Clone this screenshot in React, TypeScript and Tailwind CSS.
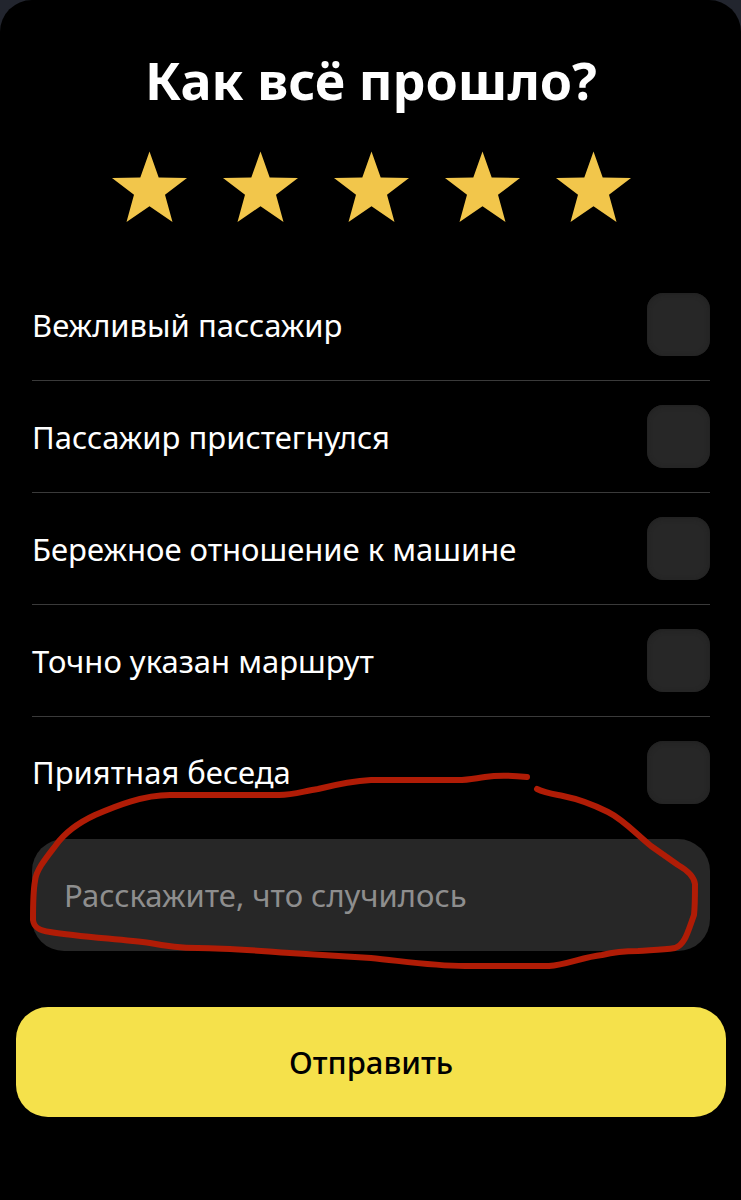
import { useState } from 'react';

const options = [
  'Вежливый пассажир',
  'Пассажир пристегнулся',
  'Бережное отношение к машине',
  'Точно указан маршрут',
  'Приятная беседа',
];

function Star({ filled }: { filled: boolean }) {
  return (
    <svg
      viewBox="0 0 75 72"
      className={filled ? 'block h-[72px] w-[75px] fill-[#f2c64b]' : 'block h-[72px] w-[75px] fill-[#272727]'}
      aria-hidden="true"
    >
      <path d="M37.5 0.5 46.7 26.6 75 27 53 43.8 60.5 71 37.5 55.2 14.5 71 22 43.8 0 27 28.3 26.6Z" />
    </svg>
  );
}

function OptionRow({ label, id }: { label: string; id: string }) {
  return (
    <li className="flex h-28 items-center justify-between border-b border-[#3a3a3a] last:h-[110px] last:border-b-0">
      <label htmlFor={id} className="flex-1 text-[31px] leading-10 text-white">
        {label}
      </label>
      <input
        id={id}
        type="checkbox"
        className="size-[63px] shrink-0 appearance-none rounded-2xl bg-[#272727] shadow-[inset_0_1px_5px_#202020] checked:bg-[#f5e14b]"
      />
    </li>
  );
}

function Highlight() {
  return (
    <svg
      viewBox="32 839 678 112"
      preserveAspectRatio="none"
      className="pointer-events-none absolute inset-0 h-full w-full overflow-visible"
      fill="none"
      stroke="#b01c06"
      strokeWidth="6"
      strokeLinecap="round"
      strokeLinejoin="round"
      aria-hidden="true"
    >
      <path d="M527 777C512 775.500 498 775 485 777C474 778.500 468 780 458 780L371 780C350 781 334 785 318 789C304 791 294 795 279 795L170 795C143 795 116 806 95 815C80 822 66 831 56 845C46 858 36 870 35 881C33 892 33 906 33 920C34 928 40 931 50 932C80 937 120 939 150 943C165 946 180 948 198 948C228 948 260 951 290 953L371 958C402 961 432 966 465 966L549 966C566 965 583 957 602 955C614 952 625 951 638 951C652 950 662 950 675 948C685 945 688 931 694 915C695 906 695 894 695 884C694 876 685 869 678 865L651 846C636 834 624 820 608 812C594 805 578 799 563 796C553 794 545 793 537 789" />
    </svg>
  );
}

export default function App() {
  const [rating, setRating] = useState(5);

  return (
    <div className="min-h-screen bg-[#22252e] font-['Noto_Sans',sans-serif]">
      <main className="min-h-screen rounded-t-[32px] bg-black pt-12 pr-[15px] pl-4">
        <h1 className="text-center text-[52px] leading-16 font-bold text-white">Как всё прошло?</h1>

        <div className="mt-[39px] flex justify-center gap-9" role="group" aria-label="Оценка">
          {[1, 2, 3, 4, 5].map((value) => (
            <button key={value} type="button" aria-label={`${value}`} onClick={() => setRating(value)}>
              <Star filled={value <= rating} />
            </button>
          ))}
        </div>

        <form onSubmit={(event) => event.preventDefault()}>
          <ul className="mt-[46px] px-4">
            {options.map((label, index) => (
              <OptionRow key={label} label={label} id={`option-${index}`} />
            ))}
          </ul>

          <div className="mx-4 mt-3">
            <div className="relative">
              <input
                type="text"
                aria-label="Расскажите, что случилось"
                placeholder="Расскажите, что случилось"
                className="block h-28 w-full rounded-[32px] bg-[#272727] px-8 text-[31px] leading-10 text-white outline-none placeholder:text-[#8e8e8e]"
              />
              <Highlight />
            </div>
          </div>

          <button
            type="submit"
            className="mt-14 block h-[110px] w-full rounded-[32px] bg-[#f5e14b] text-[31px] leading-10 font-medium text-black"
          >
            Отправить
          </button>
        </form>
      </main>
    </div>
  );
}
